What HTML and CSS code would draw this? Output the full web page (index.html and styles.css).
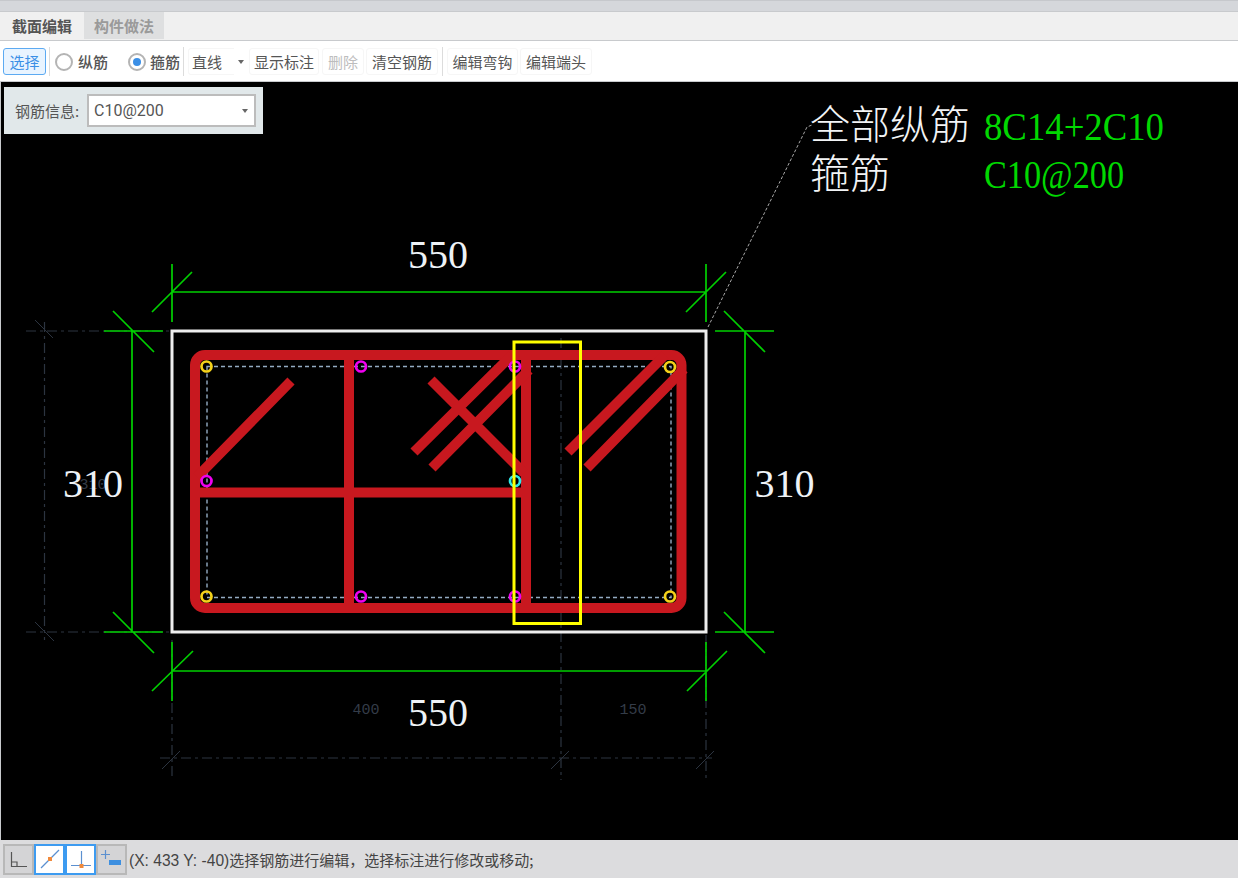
FILE: index.html
```html
<!DOCTYPE html>
<html lang="zh-CN">
<head>
<meta charset="utf-8">
<title>截面编辑</title>
<link rel="stylesheet" href="styles.css">
</head>
<body>
<div class="app">
  <div class="topstrip"></div>
  <div class="tabs">
    <div class="tab tab-active">截面编辑</div>
    <div class="tab tab-idle">构件做法</div>
  </div>
  <div class="toolbar">
    <button class="tbtn tbtn-active w-select">选择</button>
    <span class="sep s1"></span>
    <label class="radio r1"><span class="dot"></span>纵筋</label>
    <label class="radio r2"><span class="dot dot-on"></span>箍筋</label>
    <span class="sep s2"></span>
    <div class="tselect"><span class="tselect-box">直线</span><span class="caret"></span></div>
    <button class="tbtn w-show">显示标注</button>
    <button class="tbtn tbtn-off w-del">删除</button>
    <button class="tbtn w-clear">清空钢筋</button>
    <span class="sep s3"></span>
    <button class="tbtn w-hook">编辑弯钩</button>
    <button class="tbtn w-end">编辑端头</button>
  </div>
  <div class="canvas">
    <svg class="drawing" viewBox="1 82 1237 758" width="1237" height="758" xmlns="http://www.w3.org/2000/svg">
      <g class="dim-grey">
        <path d="M44.5 322V640M26 331H172M26 632H172"/>
        <path d="M160 758H712M172 640V780M561 338V780M706 635V780"/>
      </g>
      <path class="dim-tick" d="M35 320L53 338M35 622L54 641M162 769L180 751M551 769L569 751M696 769L714 751"/>
      <text class="t-grey" x="93" y="489" text-anchor="middle">310</text>
      <text class="t-grey" x="366" y="714" text-anchor="middle">400</text>
      <text class="t-grey" x="633" y="714" text-anchor="middle">150</text>

      <rect class="section" x="172" y="331" width="534" height="301"/>
      <rect class="inner" x="207" y="366.5" width="464" height="231"/>

      <g class="bar">
        <rect x="195" y="355" width="486.5" height="253" rx="10"/>
        <path d="M349 355V608M526 355V608M195 492.5H526"/>
        <path d="M197 477L291 381M414 452L512 355M432 468L529 370M431 380L524 473M568 452L665 355M587 468L684 369"/>
      </g>

      <g class="ring ring-y">
        <circle cx="206.5" cy="366.5" r="5"/><circle cx="670" cy="367" r="5"/>
        <circle cx="206.5" cy="596.5" r="5"/><circle cx="670" cy="596.5" r="5"/>
      </g>
      <g class="ring ring-m">
        <circle cx="361" cy="366.5" r="5"/><circle cx="515" cy="366.5" r="5"/>
        <circle cx="206.5" cy="481" r="5"/><circle cx="361" cy="596.5" r="5"/><circle cx="515" cy="596.5" r="5"/>
      </g>
      <g class="ring ring-c"><circle cx="515" cy="481" r="5"/></g>

      <rect class="mark" x="514" y="342" width="66.500" height="281.500"/>

      <g class="dim-green">
        <path d="M172 292H706M172 264V322M706 264V322M152 312L192 272M686 312L726 272"/>
        <path d="M132 331V632M104 331H163M104 632H163M113 311L154 352M113 612L154 653"/>
        <path d="M745 331V632M715 331H774M715 632H774M724 311L765 352M724 612L765 653"/>
        <path d="M172 671H706M172 642V701M706 642V701M152 691L193 651M687 691L727 651"/>
      </g>

      <path class="leader" d="M708 327L807 127L812 125"/>

      <text class="t-dim" x="438" y="268" text-anchor="middle">550</text>
      <text class="t-dim" x="93" y="497" text-anchor="middle">310</text>
      <text class="t-dim" x="784.500" y="497" text-anchor="middle">310</text>
      <text class="t-dim" x="438" y="726" text-anchor="middle">550</text>

      <text class="t-cjk" x="810" y="139">全部纵筋</text>
      <text class="t-cjk" x="810" y="188">箍筋</text>
      <text class="t-val" x="984" y="140" textLength="180" lengthAdjust="spacingAndGlyphs">8C14+2C10</text>
      <text class="t-val" x="984" y="188" textLength="140" lengthAdjust="spacingAndGlyphs">C10@200</text>
    </svg>
    <div class="info">
      <span class="info-label">钢筋信息:</span>
      <div class="info-select"><span>C10@200</span><span class="caret"></span></div>
    </div>
  </div>
  <div class="status">
    <div class="sbtn">
      <svg viewBox="0 0 30 30" width="30" height="30"><path class="ic-dark" d="M7.500 8V22.500H23M7.500 18H13V22.500"/></svg>
    </div>
    <div class="sbtn sbtn-on">
      <svg viewBox="0 0 30 30" width="30" height="30"><path class="ic-blue" d="M6 24L24 6"/><rect class="ic-orange" x="13" y="13" width="4" height="4"/></svg>
    </div>
    <div class="sbtn sbtn-on">
      <svg viewBox="0 0 30 30" width="30" height="30"><path class="ic-blue" d="M5 21.500H25M15.500 7V21.500"/><rect class="ic-orange" x="13.500" y="20" width="4" height="4"/></svg>
    </div>
    <div class="sbtn">
      <svg viewBox="0 0 30 30" width="30" height="30"><path class="ic-blue" d="M4 10.500H13M8.500 6V15"/><rect class="ic-fill" x="12" y="16" width="12" height="5"/></svg>
    </div>
    <span class="status-text"><span class="coords">(X: 433 Y: -40)</span>选择钢筋进行编辑，选择标注进行修改或移动;</span>
  </div>
</div>
</body>
</html>
```
FILE: styles.css
```css
* { box-sizing: border-box; }
html, body { margin: 0; padding: 0; height: 100%; overflow: hidden; }
body { font-family: "Noto Sans CJK SC", "Liberation Sans", sans-serif; color: #444; }
.app { width: 1238px; height: 878px; display: flex; flex-direction: column; background: #fff; }

.topstrip { height: 12px; background: #d5d7db; border-top: 1px solid #c6c8cc; border-bottom: 1px solid #c8cacd; flex: none; }

.tabs { height: 29px; flex: none; display: flex; padding-left: 2px; gap: 2px; background: #f0f0f0; border-bottom: 1px solid #c8cacd; }
.tab { width: 80px; height: 27px; line-height: 28px; text-align: center; font-size: 15px; font-weight: 700; }
.tab-active { background: #f0f0f0; color: #555; }
.tab-idle { background: #dedfe0; color: #9a9a9a; }

.toolbar { height: 41px; flex: none; display: flex; align-items: center; padding: 1px 0 0 3px; background: #fff; border-bottom: 1px solid #c8cacd; font-size: 15px; }
.tbtn { height: 27px; padding: 0; font: inherit; font-size: 15px; color: #555; background: #fff; border: 1px solid #f6f6f6; border-radius: 3px; text-align: center; line-height: 24px; }
.tbtn-active { color: #3b8fe6; background: #e9f4ff; border-color: #5caaf2; }
.tbtn-off { color: #bdbdbd; }
.w-select { width: 43px; }
.w-show { width: 70px; margin-left: 2px; }
.w-del { width: 42px; margin-left: 3px; }
.w-clear { width: 72px; margin-left: 2px; }
.w-hook { width: 71px; margin-left: 4px; }
.w-end { width: 72px; margin-left: 2px; }

.sep { width: 1px; height: 29px; background: #dcdcdc; flex: none; }
.s1 { margin-left: 3px; }
.s2 { margin-left: 3px; }
.s3 { margin-left: 4px; }

.radio { display: flex; align-items: center; gap: 5px; color: #555; font-size: 15px; font-weight: 500; }
.r1 { margin-left: 5px; }
.r2 { margin-left: 20px; gap: 4px; }
.dot { width: 18px; height: 18px; border-radius: 50%; border: 2px solid #b4b4b4; background: #fff; display: block; position: relative; }
.dot-on::after { content: ""; position: absolute; left: 3px; top: 3px; width: 8px; height: 8px; border-radius: 50%; background: #3b8fe6; }

.tselect { display: flex; align-items: center; margin-left: 4px; width: 59px; height: 27px; }
.tselect-box { width: 46px; height: 27px; line-height: 25px; padding-left: 3px; border: 1px solid #f6f6f6; border-right: 0; border-radius: 3px 0 0 3px; color: #555; }
.caret { width: 0; height: 0; border-left: 3.500px solid transparent; border-right: 3.500px solid transparent; border-top: 4px solid #666; display: block; flex: none; }
.tselect .caret { margin-left: 4px; }

.canvas { flex: none; height: 758px; position: relative; background: #000; border-left: 1px solid #c8cacd; }
.drawing { display: block; }

.info { position: absolute; left: 3px; top: 5px; width: 259px; height: 47px; background: #e1e8ea; display: flex; align-items: center; padding-left: 11px; }
.info-label { width: 72px; font-size: 15px; color: #555; white-space: nowrap; }
.info-select { width: 169px; height: 33px; border: 2px solid #bcbcbc; background: #fff; display: flex; align-items: center; justify-content: space-between; padding: 0 6px 0 5px; font-family: "Roboto", "Liberation Sans", sans-serif; font-size: 16px; color: #555; }

.status { height: 38px; flex: none; display: flex; align-items: center; padding-left: 3px; background: #dcdcde; }
.sbtn { width: 31px; height: 31px; border: 2px solid #b8b8b8; background: #d4d4d6; flex: none; display: flex; align-items: center; justify-content: center; }
.sbtn svg { flex: none; display: block; }
.sbtn-on { background: #fff; border-color: #3d9bf0; }
.status-text { margin-left: 2px; font-family: "Noto Sans CJK SC", sans-serif; font-size: 15px; color: #444; white-space: nowrap; }
.coords { font-family: "Liberation Sans", sans-serif; font-size: 15.600px; }

.ic-dark { fill: none; stroke: #555; stroke-width: 1.200; }
.ic-blue { fill: none; stroke: #5b90d0; stroke-width: 1.200; }
.ic-orange { fill: #f08a3c; }
.ic-fill { fill: #3d8fe0; }

.section { fill: none; stroke: #eeeeee; stroke-width: 3; }
.inner { fill: none; stroke: #93abc2; stroke-width: 1.400; stroke-dasharray: 4 3; }
.bar { fill: none; stroke: #c8181f; stroke-width: 10; }
.ring { fill: none; stroke-width: 2.700; }
.ring-y { stroke: #f4d21a; }
.ring-m { stroke: #f000f0; }
.ring-c { stroke: #30e8e8; }
.mark { fill: none; stroke: #ffff00; stroke-width: 3; }
.dim-green { fill: none; stroke: #00d000; stroke-width: 1.700; }
.dim-grey { fill: none; stroke: #2c3440; stroke-width: 1.200; stroke-dasharray: 10 4 3 4; }
.dim-tick { fill: none; stroke: #2c3440; stroke-width: 1; }
.leader { fill: none; stroke: #a8a8a8; stroke-width: 1; stroke-dasharray: 3 2; }

.t-grey { font-family: "Liberation Mono", monospace; font-size: 15px; fill: #343c48; }
.t-dim { font-family: "Liberation Serif", serif; font-size: 40px; fill: #eef2f6; }
.t-cjk { font-family: "Noto Sans CJK SC", sans-serif; font-size: 40px; font-weight: 300; fill: #f2f4f6; }
.t-val { font-family: "Liberation Serif", serif; font-size: 40px; fill: #00d800; }
```
